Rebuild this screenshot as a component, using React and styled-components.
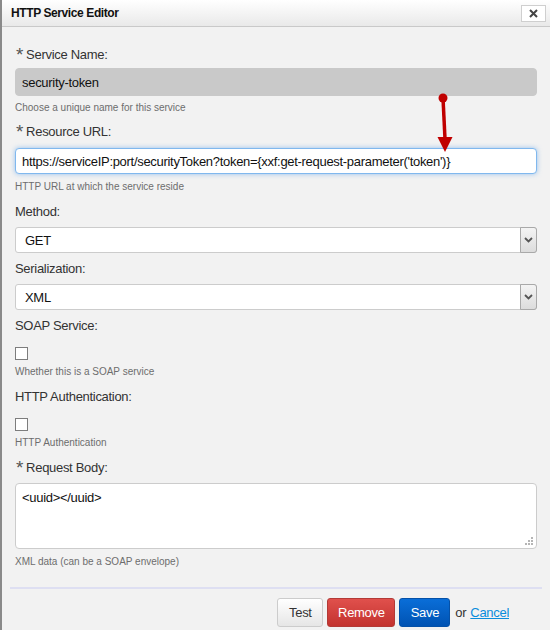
import React from 'react';
import styled, {createGlobalStyle} from 'styled-components';

const GlobalStyle = createGlobalStyle`
html, body {
  margin: 0;
  padding: 0;
  background-color: #f2f2f2;
}
* {
  box-sizing: border-box;
}
`

const Dialog = styled.div`
position: relative;
display: flex;
flex-flow: column;
width: 550px;
height: 630px;
border-left: 2px solid #8a8a8a;
background-color: #f2f2f2;
font-family: "Liberation Sans", Arial, sans-serif;
letter-spacing: -0.3px;
overflow: hidden;
`
const TitleBar = styled.div`
display: flex;
justify-content: space-between;
align-items: center;
height: 27px;
padding: 0 4px 0 9px;
background: linear-gradient(#ffffff, #e9e9e9);
border-bottom: 1px solid #c9c9c9;
`
const Title = styled.div`
font-size: 12px;
font-weight: bold;
letter-spacing: -0.4px;
color: #111;
`
const CloseButton = styled.div`
display: flex;
justify-content: center;
align-items: center;
width: 25px;
height: 17px;
background-color: white;
border: 1px solid #cfcfcf;
`
const Body = styled.div`
display: flex;
flex-flow: column;
padding: 19px 13px 0 13px;
`
const Field = styled.div`
display: flex;
flex-flow: column;
margin-bottom: ${p => p.gap || 0}px;
`
const Label = styled.div`
display: flex;
align-items: center;
height: 18px;
line-height: 18px;
font-size: 13px;
color: #333;
`
const Star = styled.span`
position: relative;
top: 0px;
height: 18px;
line-height: 18px;
font-size: 19px;
color: #555;
margin: 0 3px 0 1px;
`
const TextInput = styled.div`
display: flex;
align-items: center;
height: ${p => p.h || 26}px;
margin-top: ${p => p.top || 6}px;
padding-left: 6px;
border-radius: 4px;
font-size: 13px;
color: #111;
white-space: nowrap;
background-color: ${p => p.disabled ? '#c9c9c9' : 'white'};
border: 1px solid ${p => p.focus ? '#80b8ee' : (p.disabled ? '#c9c9c9' : '#cccccc')};
box-shadow: ${p => p.focus ? '0 0 5px rgba(90, 160, 235, 0.6)' : 'none'};
`
const Select = styled.div`
display: flex;
justify-content: space-between;
align-items: stretch;
height: 26px;
margin-top: 6px;
background-color: white;
border: 1px solid #cccccc;
border-radius: 3px;
font-size: 13px;
color: #111;
`
const SelectValue = styled.div`
display: flex;
align-items: center;
padding-left: 9px;
`
const SelectArrow = styled.div`
display: flex;
justify-content: center;
align-items: center;
width: 17px;
margin: -1px -1px -1px 0;
background: linear-gradient(#f4f4f4, #dcdcdc);
border: 1px solid #a9a9a9;
border-radius: 0 3px 3px 0;
`
const Checkbox = styled.div`
width: 13px;
height: 13px;
margin-top: 12px;
background-color: white;
border: 1px solid #7d7d7d;
`
const Help = styled.div`
height: 14px;
margin-top: ${p => p.top || 5}px;
font-size: 10px;
letter-spacing: 0;
line-height: 14px;
color: #6d6d6d;
`
const TextArea = styled.div`
position: relative;
height: 66px;
margin-top: 6px;
padding: 6px 6px;
background-color: white;
border: 1px solid #cccccc;
border-radius: 4px;
font-size: 13px;
line-height: 15px;
color: #111;
`
const Grip = styled.svg`
position: absolute;
right: 3px;
bottom: 3px;
`
const Divider = styled.div`
height: 2px;
margin: 18px -5px 0 -5px;
background-color: #dedff2;
`
const Footer = styled.div`
display: flex;
justify-content: flex-end;
align-items: center;
padding: 9px 28px 0 0;
`
const Button = styled.div`
display: flex;
justify-content: center;
align-items: center;
width: ${p => p.w}px;
height: 29px;
margin-right: 4px;
border-radius: 3px;
font-size: 13px;
color: ${p => p.kind === 'plain' ? '#333' : 'white'};
border: 1px solid ${p => p.kind === 'danger' ? '#b33a36' : p.kind === 'primary' ? '#0551a8' : '#cccccc'};
background: ${p => p.kind === 'danger'
  ? 'linear-gradient(#e0504c, #c3332f)'
  : p.kind === 'primary'
    ? 'linear-gradient(#0a6ed8, #0053b3)'
    : 'linear-gradient(#ffffff, #e6e6e6)'};
`
const Or = styled.span`
margin: 0 4px 0 1px;
font-size: 13px;
color: #333;
`
const CancelLink = styled.a`
font-size: 13px;
color: #0a8ddc;
text-decoration: underline;
cursor: pointer;
`
const Pointer = styled.svg`
position: absolute;
left: 428px;
top: 90px;
`

const Chevron = () => (
  <svg width="9" height="6" viewBox="0 0 9 6">
    <path d="M1 1 L4.5 4.5 L8 1" fill="none" stroke="#555" strokeWidth="1.8"/>
  </svg>
);

const CloseIcon = () => (
  <svg width="9" height="9" viewBox="0 0 9 9">
    <path d="M1 1 L8 8 M8 1 L1 8" fill="none" stroke="#444" strokeWidth="2"/>
  </svg>
);

const App = () => (
  <>
    <GlobalStyle/>
    <Dialog>
      <TitleBar>
        <Title>HTTP Service Editor</Title>
        <CloseButton><CloseIcon/></CloseButton>
      </TitleBar>
      <Body>
        <Field gap={8}>
          <Label><Star>*</Star>Service Name:</Label>
          <TextInput disabled h={28} top={4}>security-token</TextInput>
          <Help>Choose a unique name for this service</Help>
        </Field>
        <Field gap={9}>
          <Label><Star>*</Star>Resource URL:</Label>
          <TextInput focus top={7}>https://serviceIP:port/securityToken?token={"{"}xxf:get-request-parameter('token'){"}"}</TextInput>
          <Help top={6}>HTTP URL at which the service reside</Help>
        </Field>
        <Field gap={7}>
          <Label>Method:</Label>
          <Select>
            <SelectValue>GET</SelectValue>
            <SelectArrow><Chevron/></SelectArrow>
          </Select>
        </Field>
        <Field gap={7}>
          <Label>Serialization:</Label>
          <Select>
            <SelectValue>XML</SelectValue>
            <SelectArrow><Chevron/></SelectArrow>
          </Select>
        </Field>
        <Field gap={9}>
          <Label>SOAP Service:</Label>
          <Checkbox/>
          <Help>Whether this is a SOAP service</Help>
        </Field>
        <Field gap={9}>
          <Label>HTTP Authentication:</Label>
          <Checkbox/>
          <Help>HTTP Authentication</Help>
        </Field>
        <Field>
          <Label><Star>*</Star>Request Body:</Label>
          <TextArea>
            {"<uuid></uuid>"}
            <Grip width="8" height="8" viewBox="0 0 8 8">
              <rect x="6" y="0" width="2" height="2" fill="#b5b5b5"/>
              <rect x="3" y="3" width="2" height="2" fill="#b5b5b5"/>
              <rect x="6" y="3" width="2" height="2" fill="#b5b5b5"/>
              <rect x="0" y="6" width="2" height="2" fill="#b5b5b5"/>
              <rect x="3" y="6" width="2" height="2" fill="#b5b5b5"/>
              <rect x="6" y="6" width="2" height="2" fill="#b5b5b5"/>
            </Grip>
          </TextArea>
          <Help top={6}>XML data (can be a SOAP envelope)</Help>
        </Field>
        <Divider/>
        <Footer>
          <Button kind="plain" w={46}>Test</Button>
          <Button kind="danger" w={68}>Remove</Button>
          <Button kind="primary" w={51}>Save</Button>
          <Or>or</Or>
          <CancelLink>Cancel</CancelLink>
        </Footer>
      </Body>
      <Pointer width="28" height="66" viewBox="0 0 28 66">
        <circle cx="13" cy="8" r="4.5" fill="#c00000"/>
        <path d="M13 8 L15 49" stroke="#c00000" strokeWidth="3.5" fill="none"/>
        <polygon points="7.5,47 22.5,47 15,62" fill="#c00000"/>
      </Pointer>
    </Dialog>
  </>
);

export default App;
